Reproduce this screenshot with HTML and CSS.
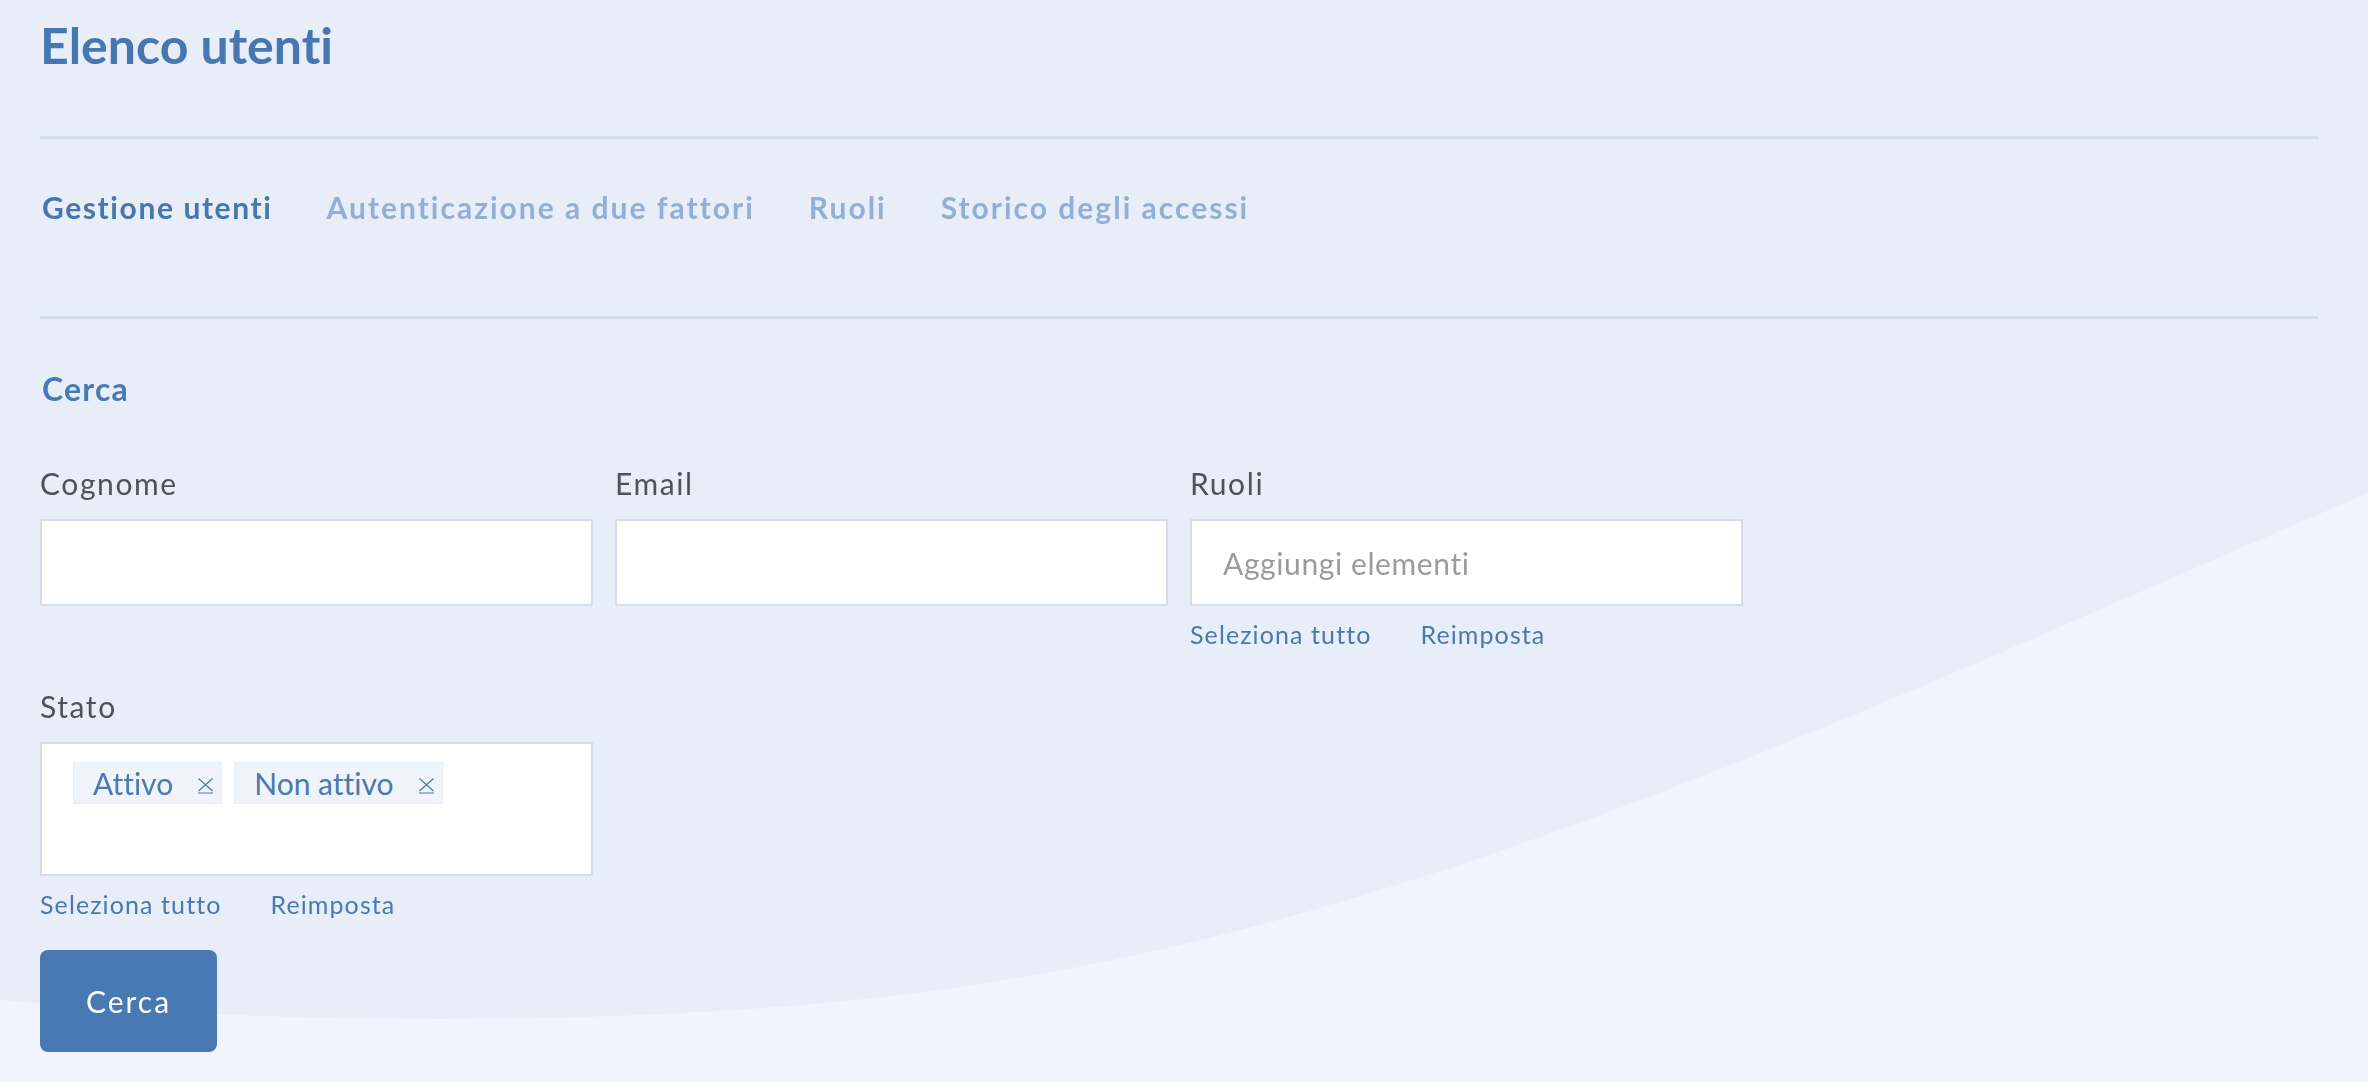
FILE: index.html
```html
<!DOCTYPE html>
<html lang="it">
<head>
<meta charset="utf-8">
<title>Elenco utenti</title>
<link rel="stylesheet" href="styles.css">
</head>
<body>
<svg class="bg-wave" viewBox="0 0 2368 1082" preserveAspectRatio="none" aria-hidden="true">
  <path d="M0,1000 C300,1027 650,1025 900,995 C1400,935 1850,716 2368,493 L2368,1082 L0,1082 Z" fill="#f0f4fc"/>
</svg>
<main class="page">
  <h1 class="page-title">Elenco utenti</h1>
  <hr class="divider">
  <nav class="tabs">
    <a class="tab tab-active">Gestione utenti</a>
    <a class="tab">Autenticazione a due fattori</a>
    <a class="tab">Ruoli</a>
    <a class="tab">Storico degli accessi</a>
  </nav>
  <hr class="divider divider-second">
  <h2 class="section-title">Cerca</h2>
  <form class="search-form">
    <div class="field">
      <label class="field-label">Cognome</label>
      <input class="field-input" type="text">
    </div>
    <div class="field">
      <label class="field-label">Email</label>
      <input class="field-input" type="text">
    </div>
    <div class="field">
      <label class="field-label">Ruoli</label>
      <input class="field-input field-placeholder" type="text" placeholder="Aggiungi elementi">
      <div class="field-links">
        <a class="field-link">Seleziona tutto</a>
        <a class="field-link">Reimposta</a>
      </div>
    </div>
    <div class="field field-first">
      <label class="field-label">Stato</label>
      <div class="tag-box">
        <span class="tag">Attivo<svg class="tag-close" viewBox="0 0 17 17"><path d="M1.5 1.5 L15.5 14 M15.5 1.5 L1.5 14 M1 16 H16"/></svg></span>
        <span class="tag">Non attivo<svg class="tag-close" viewBox="0 0 17 17"><path d="M1.5 1.5 L15.5 14 M15.5 1.5 L1.5 14 M1 16 H16"/></svg></span>
      </div>
      <div class="field-links">
        <a class="field-link">Seleziona tutto</a>
        <a class="field-link">Reimposta</a>
      </div>
    </div>
  </form>
  <button class="btn-primary" type="button">Cerca</button>
</main>
</body>
</html>
```
FILE: styles.css
```css
html, body {
  margin: 0;
  padding: 0;
  height: 100%;
  overflow: hidden;
}

body {
  background: #e7eef8;
  font-family: "Lato", "Noto Sans", sans-serif;
  font-variant-ligatures: none;
  color: #4f5257;
  position: relative;
}

.bg-wave {
  position: fixed;
  left: 0;
  top: 0;
  width: 100%;
  height: 100%;
  z-index: 0;
}

.page {
  position: relative;
  z-index: 1;
  padding: 15px 50px 0 40px;
  display: flex;
  flex-direction: column;
  align-items: flex-start;
}

.page-title {
  margin: 0;
  font-size: 50px;
  line-height: 60px;
  font-weight: 700;
  color: #4677b0;
}

.divider {
  align-self: stretch;
  margin: 61px 0 0 0;
  border: 0;
  height: 3px;
  background: #d3dce8;
}

.divider-second {
  margin-top: 91px;
}

.tabs {
  display: flex;
  gap: 54px;
  margin-top: 50px;
  padding-left: 2px;
}

.tab {
  font-size: 30px;
  line-height: 36px;
  font-weight: 700;
  letter-spacing: 2px;
  color: #93afd5;
  cursor: pointer;
}

.tab-active {
  color: #4677b0;
  letter-spacing: 1.6px;
}

.section-title {
  margin: 50px 0 0 2px;
  font-size: 32px;
  line-height: 40px;
  font-weight: 700;
  letter-spacing: 1.2px;
  color: #4a7ab4;
}

.search-form {
  margin-top: 56px;
  display: grid;
  grid-template-columns: repeat(3, 553px);
  column-gap: 22px;
  row-gap: 39px;
  align-items: start;
}

.field {
  display: flex;
  flex-direction: column;
  align-items: flex-start;
}

.field-first {
  grid-column: 1;
}

.field-label {
  font-size: 30px;
  line-height: 36px;
  font-weight: 400;
  letter-spacing: 1.6px;
  color: #4f5257;
}

.field-input {
  box-sizing: border-box;
  margin-top: 18px;
  width: 553px;
  height: 87px;
  border: 2px solid #d5dde8;
  background: #ffffff;
  padding: 0 31px;
  font-family: "Lato", "Noto Sans", sans-serif;
  font-size: 30px;
  letter-spacing: 0.6px;
  color: #4f5257;
  outline: none;
}

.field-placeholder::placeholder {
  color: #9b9b9b;
  opacity: 1;
}

.field-links {
  display: flex;
  gap: 49px;
  margin-top: 13px;
}

.field-link {
  font-size: 25px;
  line-height: 30px;
  letter-spacing: 1.1px;
  color: #4a78b0;
  cursor: pointer;
}

.tag-box {
  box-sizing: border-box;
  margin-top: 18px;
  width: 553px;
  height: 134px;
  border: 2px solid #d5dde8;
  background: #ffffff;
  padding: 18px 31px;
  display: flex;
  align-items: flex-start;
  gap: 12px;
}

.tag {
  box-sizing: border-box;
  height: 42px;
  display: inline-flex;
  align-items: center;
  gap: 24px;
  padding: 0 7px 0 19px;
  background: #eff3fa;
  border: 1px solid #e9eef6;
  font-size: 30px;
  color: #4a78b0;
}

.tag-close {
  width: 17px;
  height: 17px;
  margin-top: 4px;
  fill: none;
  stroke: #4a78b0;
  stroke-width: 1.2;
}

.btn-primary {
  margin-top: 31px;
  width: 177px;
  height: 102px;
  border: 0;
  border-radius: 8px;
  background: #4879b2;
  color: #ffffff;
  font-family: "Lato", "Noto Sans", sans-serif;
  font-size: 30px;
  letter-spacing: 2px;
  cursor: pointer;
}
```
